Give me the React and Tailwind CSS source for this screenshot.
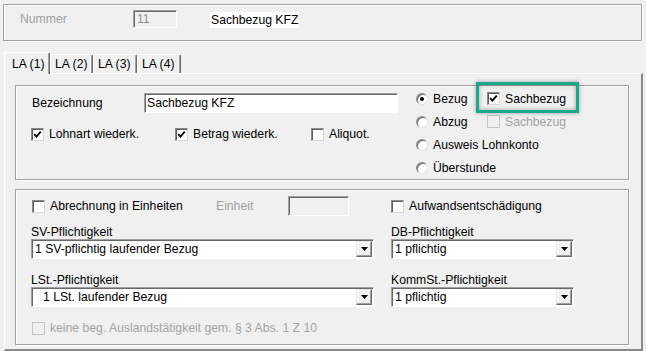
import React from "react";

const sunken =
  "border border-t-[#a0a0a0] border-l-[#a0a0a0] border-b-white border-r-white shadow-[inset_1px_1px_0_#696969]";

function Check({ checked = false, disabled = false }) {
  return (
    <span
      className={
        disabled
          ? "w-[13px] h-[13px] shrink-0 border border-[#c4c4c4] bg-[#f0f0f0] flex items-center justify-center"
          : "w-[13px] h-[13px] shrink-0 border border-t-[#8a8a8a] border-l-[#8a8a8a] border-b-[#d8d8d8] border-r-[#d8d8d8] bg-white shadow-[inset_1px_1px_0_#5f5f5f] flex items-center justify-center"
      }
    >
      {checked && (
        <svg width="9" height="9" viewBox="0 0 9 9">
          <path d="M1.2 4.2 L3.4 6.6 L7.8 1.6" stroke="#000" strokeWidth="1.9" fill="none" />
        </svg>
      )}
    </span>
  );
}

function CheckItem({ checked, disabled, label, className = "" }) {
  return (
    <div className={"flex items-center gap-[5px] h-[14px] " + className}>
      <Check checked={checked} disabled={disabled} />
      <span className={disabled ? "text-[#a3a3a3] whitespace-nowrap" : "whitespace-nowrap"}>{label}</span>
    </div>
  );
}

function Radio({ selected = false, label }) {
  return (
    <div className="flex items-center gap-[5px] w-[71px] shrink-0">
      <span className="w-[12px] h-[12px] rounded-full shrink-0 bg-white border border-t-[#8a8a8a] border-l-[#8a8a8a] border-b-[#e3e3e3] border-r-[#e3e3e3] shadow-[inset_1px_1px_0_#6a6a6a] flex items-center justify-center">
        {selected && <span className="w-[4px] h-[4px] rounded-full bg-black" />}
      </span>
      <span className="whitespace-nowrap">{label}</span>
    </div>
  );
}

function Combo({ value, textPad = "pl-[3px]" }) {
  return (
    <div className={"h-[20px] bg-white flex items-center justify-between " + sunken}>
      <span className={"whitespace-nowrap " + textPad}>{value}</span>
      <span className="w-[16px] h-[16px] mr-[1px] bg-[#f0f0f0] border border-t-[#e3e3e3] border-l-[#e3e3e3] border-b-[#696969] border-r-[#696969] shadow-[inset_-1px_-1px_0_#a0a0a0,inset_1px_1px_0_#ffffff] flex items-center justify-center">
        <svg width="7" height="4" viewBox="0 0 7 4">
          <path d="M0 0 H7 L3.5 4 Z" fill="#000" />
        </svg>
      </span>
    </div>
  );
}

function Tab({ label, selected, w }) {
  return (
    <div
      className={
        selected
          ? "h-[22px] bg-[#f0f0f0] border-t border-l border-white border-r border-r-[#696969] shadow-[inset_-1px_0_0_#a0a0a0] rounded-t-[2px] pl-[7px] flex items-center"
          : "h-[19px] mb-[1px] bg-[#f0f0f0] border-t border-l border-white border-r border-r-[#696969] shadow-[inset_-1px_0_0_#a0a0a0] rounded-t-[2px] pl-[4px] flex items-center"
      }
      style={{ width: w }}
    >
      <span className="whitespace-nowrap">{label}</span>
    </div>
  );
}

const group =
  "border border-[#a0a0a0] shadow-[inset_1px_1px_0_#ffffff,1px_1px_0_#ffffff]";

export default function App() {
  return (
    <div className="w-[646px] h-[351px] bg-[#f0f0f0] overflow-hidden font-['Liberation_Sans',Arial,sans-serif] text-[12.2px] leading-[14px] text-black">
      {/* top group */}
      <div className={"ml-[3px] mt-[4px] w-[639px] h-[37px] flex items-start pt-[5px] " + group}>
        <span className="ml-[16px] w-[113px] h-[18px] flex items-center text-[#a0a0a0]">Nummer</span>
        <div className={"w-[44px] h-[18px] bg-[#f0f0f0] flex items-center pl-[3px] text-[#8c8c8c] " + sunken}>11</div>
        <span className="ml-[33px] h-[16px] mt-[2px] bg-white px-[1px] flex items-center">Sachbezug KFZ</span>
      </div>

      {/* tabs */}
      <div className="ml-[4px] mt-[11px] h-[22px] -mb-[1px] flex items-end relative z-10">
        <Tab label="LA (1)" selected w={46} />
        <Tab label="LA (2)" w={43} />
        <Tab label="LA (3)" w={44} />
        <Tab label="LA (4)" w={44} />
      </div>

      {/* panel */}
      <div className="ml-[4px] w-[639px] h-[278px] border-t border-l border-white border-r-2 border-b-2 border-r-[#8a8a8a] border-b-[#8a8a8a] pt-[11px] pl-[10px]">
        {/* group 1 */}
        <div className={"w-[614px] h-[95px] flex " + group}>
          <div className="w-[400px] pl-[16px] pt-[7px]">
            <div className="flex items-center h-[20px]">
              <span className="w-[112px]">Bezeichnung</span>
              <div className={"w-[254px] h-[20px] bg-white pl-[2px] flex items-center " + sunken}>Sachbezug KFZ</div>
            </div>
            <div className="flex items-center mt-[14px] -ml-[1px]">
              <CheckItem checked label="Lohnart wiederk." className="w-[144px]" />
              <CheckItem checked label="Betrag wiederk." className="w-[136px]" />
              <CheckItem label="Aliquot." />
            </div>
          </div>
          <div className="pt-[1px]">
            <div className="flex items-stretch h-[23px]">
              <Radio selected label="Bezug" />
              <div className="relative flex items-center">
                <CheckItem checked label="Sachbezug" />
                <div className="absolute left-[-11px] top-[-5px] w-[103px] h-[31px] border-[3px] border-[#17a98b] shadow-[0_0_4px_rgba(0,0,0,0.35),inset_0_0_4px_rgba(0,0,0,0.35)]" />
              </div>
            </div>
            <div className="flex items-center h-[23px]">
              <Radio label="Abzug" />
              <CheckItem disabled label="Sachbezug" />
            </div>
            <div className="flex items-center h-[23px]">
              <Radio label="Ausweis Lohnkonto" />
            </div>
            <div className="flex items-center h-[23px]">
              <Radio label="Überstunde" />
            </div>
          </div>
        </div>

        {/* group 2 */}
        <div className={"mt-[9px] w-[614px] h-[156px] pl-[15px] pt-[6px] " + group}>
          <div className="grid grid-cols-[343px_183px] gap-x-[17px]">
            <div className="flex items-center h-[20px]">
              <CheckItem label="Abrechnung in Einheiten" className="ml-[1px] w-[184px]" />
              <span className="w-[72px] text-[#a0a0a0]">Einheit</span>
              <div className={"w-[61px] h-[20px] bg-[#f0f0f0] " + sunken} />
            </div>
            <div className="flex items-center h-[20px]">
              <CheckItem label="Aufwandsentschädigung" />
            </div>

            <div className="mt-[8px] h-[15px] flex items-center">SV-Pflichtigkeit</div>
            <div className="mt-[8px] h-[15px] flex items-center">DB-Pflichtigkeit</div>
            <Combo value="1 SV-pflichtig laufender Bezug" />
            <Combo value="1 pflichtig" />

            <div className="mt-[13px] h-[15px] flex items-center">LSt.-Pflichtigkeit</div>
            <div className="mt-[13px] h-[15px] flex items-center">KommSt.-Pflichtigkeit</div>
            <Combo value="1 LSt. laufender Bezug" textPad="pl-[11px]" />
            <Combo value="1 pflichtig" />
          </div>
          <CheckItem disabled label="keine beg. Auslandstätigkeit gem. § 3 Abs. 1 Z 10" className="mt-[14px] ml-[1px]" />
        </div>
      </div>
    </div>
  );
}
